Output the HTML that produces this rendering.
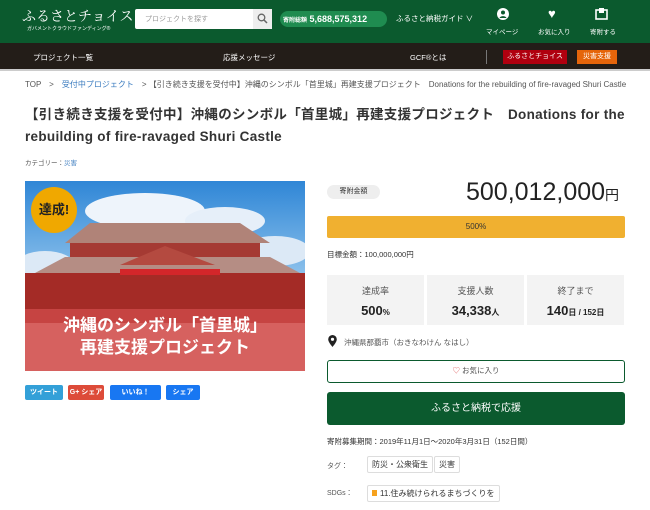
<!DOCTYPE html>
<html><head><meta charset="utf-8"><style>
*{box-sizing:border-box;margin:0;padding:0}
body{width:650px;height:510px;overflow:hidden;background:#fff;font-family:"Liberation Sans","Noto Sans CJK JP",sans-serif;color:#333;position:relative}
.a{position:absolute}
.hd{left:0;top:0;width:650px;height:43px;background:#0b5a2e}
.nv{left:0;top:43px;width:650px;height:28px;background:#231d18;border-bottom:2px solid #ccc}
.w{color:#fff}
.stat{background:#f3f3f3;top:275px;height:50px;width:97px;text-align:center}
.stat .l{font-size:9px;color:#555;margin-top:9px}
.stat .v{font-size:13px;font-weight:bold;margin-top:6px;color:#222}
.tag{border:1px solid #ddd;border-radius:2px;font-size:8px;padding:2px 4px;background:#fff}
.sb{top:385px;height:15px;font-size:7px;color:#fff;font-weight:bold;border-radius:2px;text-align:center;line-height:15px}
</style></head><body>
<div class="a hd"></div>
<div class="a w" style="left:22px;top:6px;font-size:14px;font-family:'Liberation Serif','Noto Serif CJK SC',serif">ふるさとチョイス</div>
<div class="a w" style="left:27px;top:25px;font-size:5px">ガバメントクラウドファンディング®</div>
<div class="a" style="left:135px;top:9px;width:137px;height:20px;background:#fff;border-radius:2px"></div>
<div class="a" style="left:145px;top:14px;font-size:7px;color:#999">プロジェクトを探す</div>
<div class="a" style="left:253px;top:9px;width:19px;height:20px;background:#eee"></div>
<svg class="a" style="left:257px;top:13px" width="11" height="11"><circle cx="4.5" cy="4.5" r="3.3" stroke="#666" stroke-width="1.3" fill="none"/><line x1="7" y1="7" x2="10" y2="10" stroke="#666" stroke-width="1.5"/></svg>
<div class="a w" style="left:280px;top:11px;width:107px;height:16px;background:#1f8c50;border-radius:8px;font-size:9px;font-weight:bold;line-height:16px;padding-left:3px"><span style="font-size:6px">寄附総額</span> 5,688,575,312</div>
<div class="a w" style="left:396px;top:13px;font-size:7.5px">ふるさと納税ガイド ∨</div>
<svg class="a" style="left:497px;top:8px" width="12" height="12"><circle cx="6" cy="6" r="6" fill="#fff"/><circle cx="6" cy="4.5" r="2" fill="#0b5a2e"/><path d="M2.5 10c1-2.5 6-2.5 7 0" fill="#0b5a2e"/></svg>
<div class="a w" style="left:486px;top:26px;font-size:6.5px">マイページ</div>
<div class="a w" style="left:548px;top:6px;font-size:13px">♥</div>
<div class="a w" style="left:538px;top:26px;font-size:6.5px">お気に入り</div>
<svg class="a" style="left:595px;top:7px" width="13" height="13"><rect x="1" y="3" width="11" height="9" fill="none" stroke="#fff" stroke-width="1.6"/><rect x="4" y="1" width="5" height="5" fill="#fff"/></svg>
<div class="a w" style="left:590px;top:26px;font-size:6.5px">寄附する</div>
<div class="a nv"></div>
<div class="a w" style="left:33px;top:52px;font-size:7.5px">プロジェクト一覧</div>
<div class="a w" style="left:223px;top:52px;font-size:7.5px">応援メッセージ</div>
<div class="a w" style="left:410px;top:52px;font-size:7.5px">GCF®とは</div>
<div class="a" style="left:486px;top:50px;width:1px;height:14px;background:#777"></div>
<div class="a w" style="left:503px;top:50px;width:64px;height:14px;background:#b0000f;font-size:7px;text-align:center;line-height:14px">ふるさとチョイス</div>
<div class="a w" style="left:577px;top:50px;width:40px;height:14px;background:#e5650b;font-size:7px;text-align:center;line-height:14px">災害支援</div>
<div class="a" style="left:25px;top:79px;font-size:8px;color:#555;white-space:nowrap">TOP　&gt;　<span style="color:#3a7bbf">受付中プロジェクト</span>　&gt; 【引き続き支援を受付中】沖縄のシンボル「首里城」再建支援プロジェクト　Donations for the rebuilding of fire-ravaged Shuri Castle</div>
<div class="a" style="left:25px;top:104px;width:605px;font-size:13.5px;font-weight:bold;line-height:22px;color:#333;word-break:break-all;letter-spacing:0.3px">【引き続き支援を受付中】沖縄のシンボル「首里城」再建支援プロジェクト　Donations for the rebuilding of fire-ravaged Shuri Castle</div>
<div class="a" style="left:25px;top:157px;font-size:6.5px;color:#555">カテゴリー：<span style="color:#3a7bbf">災害</span></div>
<div class="a" style="left:25px;top:181px;width:280px;height:190px;overflow:hidden;background:#3d8fd8">
<svg width="280" height="190" style="position:absolute;left:0;top:0">
<defs><linearGradient id="s" x1="0" y1="0" x2="0" y2="1"><stop offset="0" stop-color="#2f86d6"/><stop offset="1" stop-color="#9ccbef"/></linearGradient></defs>
<rect width="280" height="110" fill="url(#s)"/>
<ellipse cx="120" cy="30" rx="60" ry="18" fill="#eef4fb"/><ellipse cx="200" cy="40" rx="40" ry="14" fill="#e6eff9"/><ellipse cx="250" cy="70" rx="35" ry="15" fill="#dce9f6"/><ellipse cx="20" cy="85" rx="30" ry="15" fill="#dce9f6"/>
<polygon points="40,62 65,42 215,42 245,62" fill="#b08378"/>
<rect x="45" y="62" width="190" height="18" fill="#a53a33"/>
<polygon points="10,92 40,76 245,76 275,92" fill="#b58d84"/>
<polygon points="95,84 140,65 190,84" fill="#b44a40"/>
<rect x="0" y="92" width="280" height="50" fill="#a42b26"/>
<rect x="95" y="88" width="100" height="6" fill="#d3262a"/>
<rect x="0" y="142" width="280" height="48" fill="#c86b67"/>
</svg>
<div class="a" style="left:0;top:128px;width:280px;height:62px;background:rgba(225,90,90,.55)"></div>
<div class="a" style="left:6px;top:6px;width:46px;height:46px;border-radius:50%;background:#f0a800;color:#222;font-weight:bold;font-size:13px;text-align:center;line-height:46px">達成!</div>
<div class="a w" style="left:0;top:134px;width:280px;text-align:center;font-size:17px;font-weight:bold;line-height:22px">沖縄のシンボル「首里城」<br>再建支援プロジェクト</div>
</div>
<div class="a sb" style="left:25px;top:385px;width:38px;background:#33a0d8">ツイート</div>
<div class="a sb" style="left:68px;width:36px;background:#dd4b39">G+ シェア</div>
<div class="a sb" style="left:110px;width:51px;background:#1877f2">いいね！</div>
<div class="a sb" style="left:166px;width:34px;background:#1877f2">シェア</div>
<div class="a" style="left:327px;top:185px;width:53px;height:14px;background:#eee;border-radius:7px;font-size:7px;text-align:center;line-height:14px">寄附金額</div>
<div class="a" style="left:466px;top:178px;font-size:25px;color:#222">500,012,000<span style="font-size:14px">円</span></div>
<div class="a" style="left:327px;top:216px;width:298px;height:22px;background:#f0b030;border-radius:2px;font-size:8px;text-align:center;line-height:22px;color:#333">500%</div>
<div class="a" style="left:327px;top:249px;font-size:7.5px;color:#333">目標金額：100,000,000円</div>
<div class="a stat" style="left:327px"><div class="l">達成率</div><div class="v">500<span style="font-size:8px">%</span></div></div>
<div class="a stat" style="left:427px"><div class="l">支援人数</div><div class="v">34,338<span style="font-size:8px">人</span></div></div>
<div class="a stat" style="left:527px"><div class="l">終了まで</div><div class="v">140<span style="font-size:8px">日 / 152日</span></div></div>
<svg class="a" style="left:328px;top:335px" width="9" height="12"><path d="M4.5 0a4.3 4.3 0 0 0-4.3 4.3c0 3 4.3 7.7 4.3 7.7s4.3-4.7 4.3-7.7A4.3 4.3 0 0 0 4.5 0z" fill="#222"/><circle cx="4.5" cy="4.3" r="1.6" fill="#fff"/></svg>
<div class="a" style="left:344px;top:337px;font-size:7.5px;color:#555">沖縄県那覇市（おきなわけん なはし）</div>
<div class="a" style="left:327px;top:360px;width:298px;height:23px;border:1.5px solid #0b5a2e;border-radius:3px;font-size:7.5px;text-align:center;line-height:20px;color:#555"><span style="color:#d55">♡</span> お気に入り</div>
<div class="a w" style="left:327px;top:392px;width:298px;height:33px;background:#0b5a2e;border-radius:3px;font-size:10px;text-align:center;line-height:33px">ふるさと納税で応援</div>
<div class="a" style="left:327px;top:436px;font-size:7.5px;color:#333">寄附募集期間：2019年11月1日～2020年3月31日（152日間）</div>
<div class="a" style="left:327px;top:461px;font-size:7px;color:#555">タグ：</div>
<div class="a tag" style="left:367px;top:456px">防災・公衆衛生</div>
<div class="a tag" style="left:434px;top:456px">災害</div>
<div class="a" style="left:327px;top:488px;font-size:7px;color:#555">SDGs：</div>
<div class="a tag" style="left:367px;top:485px"><span style="display:inline-block;width:5px;height:6px;background:#f6a21e;margin-right:3px"></span>11.住み続けられるまちづくりを</div>
</body></html>
